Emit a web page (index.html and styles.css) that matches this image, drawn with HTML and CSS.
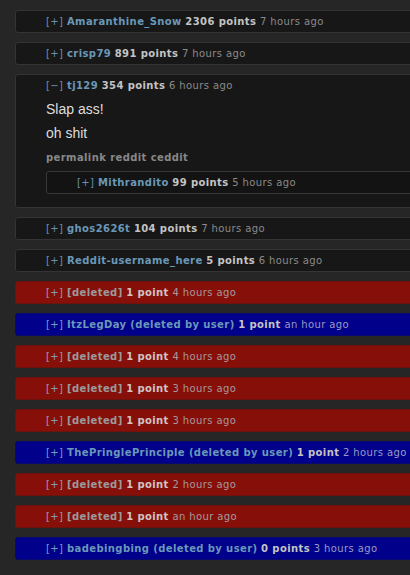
FILE: index.html
```html
<!DOCTYPE html>
<html>
<head>
<meta charset="utf-8">
<link rel="stylesheet" href="styles.css">
</head>
<body>
<div class="list">
  <div class="row">
    <span class="expand">[+]</span> <span class="author">Amaranthine_Snow</span> <span class="score">2306 points</span> <span class="time">7 hours ago</span>
  </div>
  <div class="row">
    <span class="expand">[+]</span> <span class="author">crisp79</span> <span class="score">891 points</span> <span class="time">7 hours ago</span>
  </div>
  <div class="row open">
    <div class="tagline"><span class="expand">[&minus;]</span> <span class="author">tj129</span> <span class="score">354 points</span> <span class="time">6 hours ago</span></div>
    <div class="md">
      <p>Slap ass!</p>
      <p>oh shit</p>
    </div>
    <div class="buttons">permalink reddit ceddit</div>
    <div class="row child">
      <span class="expand">[+]</span> <span class="author">Mithrandito</span> <span class="score">99 points</span> <span class="time">5 hours ago</span>
    </div>
  </div>
  <div class="row">
    <span class="expand">[+]</span> <span class="author">ghos2626t</span> <span class="score">104 points</span> <span class="time">7 hours ago</span>
  </div>
  <div class="row">
    <span class="expand">[+]</span> <span class="author">Reddit-username_here</span> <span class="score">5 points</span> <span class="time">6 hours ago</span>
  </div>
  <div class="row red">
    <span class="expand">[+]</span> <span class="deleted">[deleted]</span> <span class="score">1 point</span> <span class="time">4 hours ago</span>
  </div>
  <div class="row blue">
    <span class="expand">[+]</span> <span class="author">ItzLegDay (deleted by user)</span> <span class="score">1 point</span> <span class="time">an hour ago</span>
  </div>
  <div class="row red">
    <span class="expand">[+]</span> <span class="deleted">[deleted]</span> <span class="score">1 point</span> <span class="time">4 hours ago</span>
  </div>
  <div class="row red">
    <span class="expand">[+]</span> <span class="deleted">[deleted]</span> <span class="score">1 point</span> <span class="time">3 hours ago</span>
  </div>
  <div class="row red">
    <span class="expand">[+]</span> <span class="deleted">[deleted]</span> <span class="score">1 point</span> <span class="time">3 hours ago</span>
  </div>
  <div class="row blue">
    <span class="expand">[+]</span> <span class="author">ThePringlePrinciple (deleted by user)</span> <span class="score">1 point</span> <span class="time">2 hours ago</span>
  </div>
  <div class="row red">
    <span class="expand">[+]</span> <span class="deleted">[deleted]</span> <span class="score">1 point</span> <span class="time">2 hours ago</span>
  </div>
  <div class="row red">
    <span class="expand">[+]</span> <span class="deleted">[deleted]</span> <span class="score">1 point</span> <span class="time">an hour ago</span>
  </div>
  <div class="row blue">
    <span class="expand">[+]</span> <span class="author">badebingbing (deleted by user)</span> <span class="score">0 points</span> <span class="time">3 hours ago</span>
  </div>
</div>
</body>
</html>
```
FILE: styles.css
```css
html, body {
  margin: 0;
  padding: 0;
  background: #262626;
  overflow: hidden;
  height: 575px;
}
body {
  font-family: "DejaVu Sans", Verdana, sans-serif;
  font-size: 10px;
  letter-spacing: 0.4px;
}
.list {
  padding: 10px 0 0 15px;
  width: 440px;
}
.row {
  background: #171717;
  border: 1px solid #343434;
  border-radius: 3px;
  padding: 4px 0 4px 30px;
  line-height: 13px;
  height: 13px;
  margin-bottom: 9px;
  white-space: nowrap;
}
.row.open {
  height: auto;
  padding-bottom: 13px;
  margin-bottom: 9px;
}
.expand {
  color: #6a8fae;
}
.author {
  color: #6a98b8;
  font-weight: bold;
}
.score {
  color: #c4c4c4;
  font-weight: bold;
}
.time {
  color: #8a8a8a;
}
.deleted {
  color: #9a9a9a;
  font-weight: bold;
}
.md {
  margin-top: 5px;
  font-family: "Liberation Sans", Arial, sans-serif;
  font-size: 14px;
  letter-spacing: 0;
  color: #dedede;
}
.md p {
  margin: 0;
  line-height: 24px;
}
.buttons {
  margin-top: 6px;
  color: #888;
  font-weight: bold;
}
.row.child {
  margin: 7px 0 0 0;
  background: #131313;
  border-color: #383838;
}
.row.red {
  background: #870f0a;
  border-color: #6e120e;
}
.row.red .expand { color: #8a9db0; }
.row.red .time { color: #a49a9a; }
.row.red .score { color: #d0c4c4; }
.row.blue {
  background: #00008b;
  border-color: #0a0a6e;
}
.row.blue .expand { color: #7a9cc4; }
.row.blue .time { color: #9a9ac4; }
```
